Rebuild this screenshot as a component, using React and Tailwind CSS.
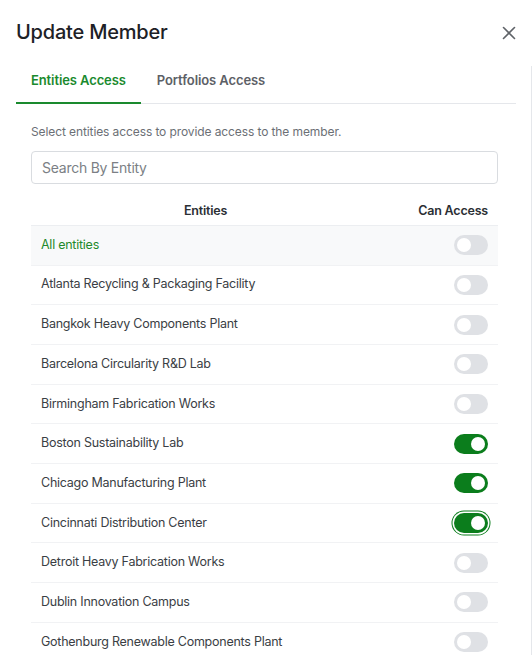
import React from "react";

const rows = [
  ["Atlanta Recycling & Packaging Facility", false],
  ["Bangkok Heavy Components Plant", false],
  ["Barcelona Circularity R&D Lab", false],
  ["Birmingham Fabrication Works", false],
  ["Boston Sustainability Lab", true],
  ["Chicago Manufacturing Plant", true],
  ["Cincinnati Distribution Center", true, true],
  ["Detroit Heavy Fabrication Works", false],
  ["Dublin Innovation Campus", false],
  ["Gothenburg Renewable Components Plant", false],
];

function Toggle({ on, focus }) {
  return (
    <div
      className={
        "relative w-[34px] h-[20px] rounded-full " +
        (on ? "bg-[#0b7d1c]" : "bg-[#dfe1e5]") +
        (focus ? " ring-1 ring-[#0b7d1c] ring-offset-[1.5px] ring-offset-white" : "")
      }
    >
      <div
        className={
          "absolute top-[3px] w-[14px] h-[14px] rounded-full bg-white " +
          (on ? "left-[17px]" : "left-[3px]")
        }
      />
    </div>
  );
}

export default function App() {
  return (
    <div
      className="w-[532px] h-[655px] bg-white overflow-hidden relative"
      style={{ fontFamily: "Inter, 'Liberation Sans', sans-serif" }}
    >
      <div className="absolute right-0 top-[66px] bottom-0 w-px bg-[#e5e7eb]" />
      <div className="flex items-center justify-between pl-4 pr-[16px] pt-[19px]">
        <h1 className="text-[20px] font-medium text-[#1d2126] leading-[26px] tracking-[-0.2px]">Update Member</h1>
        <svg width="14" height="14" viewBox="0 0 14 14" className="mt-[1px]">
          <path d="M1.5 1.5 L12.5 12.5 M12.5 1.5 L1.5 12.5" stroke="#5f6368" strokeWidth="1.6" strokeLinecap="round" />
        </svg>
      </div>
      <div className="mx-4 mt-[26px] flex border-b border-[#e5e7eb]">
        <div className="px-[15px] pb-[11px] border-b-2 border-[#1a8a2e] -mb-px text-[13px] font-semibold text-[#1a8a2e] tracking-[-0.1px]">
          Entities Access
        </div>
        <div className="px-[16px] pb-[11px] text-[13px] font-semibold text-[#5c6066] tracking-[-0.1px]">
          Portfolios Access
        </div>
      </div>
      <div className="px-[31px] pr-[34px]">
        <p className="mt-[20px] text-[12px] text-[#6b6f75] leading-[16px] tracking-[-0.1px]">
          Select entities access to provide access to the member.
        </p>
        <div className="mt-[11px] h-[33px] rounded border border-[#d9dce0] flex items-center px-[10px] text-[14px] text-[#7b7f85] tracking-[-0.25px]">
          Search By Entity
        </div>
        <div className="mt-[14px] flex items-center h-[28px] border-b border-[#eceef1] text-[12.5px] font-semibold text-[#2b2f34] tracking-[-0.2px]">
          <div className="flex-1 text-center pl-[10px] pr-[10px]">Entities</div>
          <div className="w-[118px] text-right pr-[10px]">Can Access</div>
        </div>
        <div className="flex items-center h-[40px] bg-[#f8f9fa] border-b border-[#f1f2f4] pl-[10px] pr-[10px]">
          <div className="flex-1 text-[12.5px] text-[#1f8a2c] tracking-[-0.25px]">All entities</div>
          <Toggle on={false} />
        </div>
        {rows.map(([name, on, focus]) => (
          <div
            key={name}
            className="flex items-center h-[39.7px] border-b border-[#f1f2f4] pl-[10px] pr-[10px]"
          >
            <div className="flex-1 text-[12.5px] text-[#3a3e44] tracking-[-0.25px]">{name}</div>
            <Toggle on={on} focus={focus} />
          </div>
        ))}
      </div>
    </div>
  );
}
